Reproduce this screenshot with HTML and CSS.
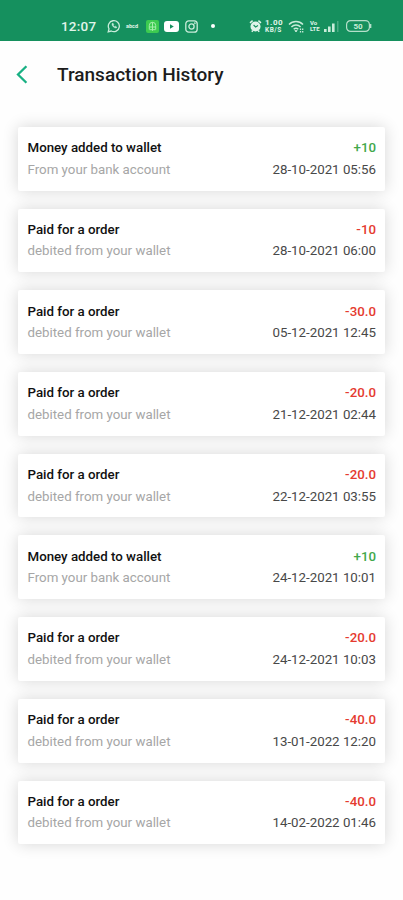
FILE: index.html
```html
<!DOCTYPE html>
<html lang="en">

<head>
    <meta charset="UTF-8">
    <meta name="viewport" content="width=device-width, initial-scale=1.0">
    <title>Transaction History</title>
    <link rel="stylesheet" href="styles.css">
</head>

<body>
    <!-- status bar -->
    <div class="status-bar">
        <div class="status-left">
            <span class="time">12:07</span>
            <svg class="whatsapp" width="14" height="14" viewBox="0 0 14 14" fill="none" stroke="#c9ecda">
                <path d="M1.2 12.8l.8-3A5.5 5.5 0 1 1 4.2 12z" stroke-width="1.3" />
                <path d="M5 4.600c-.5 2 2.300 4.900 4.400 4.400l.3-1-1.300-.8-.8.6-1.400-1.500.5-.8-.7-1.300z" fill="#c9ecda" stroke-width=".5" />
            </svg>
            <span class="carrier">abcd</span>
            <svg class="app" width="13" height="13" viewBox="0 0 13 13">
                <rect width="13" height="13" rx="2" fill="#3ccb50" />
                <path d="M6.500 2.200v8.600M3.300 9.500V5.500a3.200 3.200 0 0 1 6.400 0v4M3.300 7h6.400M3.500 9.700h6" fill="none" stroke="#a5efac" stroke-width="1" />
            </svg>
            <svg class="youtube" width="15" height="11" viewBox="0 0 15 11">
                <rect width="15" height="11" rx="3" fill="#fff" />
                <path d="M6 3.300v4.400L9.800 5.500z" fill="#15905e" />
            </svg>
            <svg class="instagram" width="13" height="13" viewBox="0 0 13 13" fill="none" stroke="#c9ecda" stroke-width="1.300">
                <rect x=".8" y=".8" width="11.400" height="11.400" rx="3" />
                <circle cx="6.500" cy="6.500" r="2.600" />
                <circle cx="9.800" cy="3.200" r=".3" />
            </svg>
            <span class="dot"></span>
        </div>
        <div class="status-right">
            <svg class="alarm" width="13" height="14" viewBox="0 0 13 14" fill="none" stroke="#e0f5ea">
                <circle cx="6.500" cy="7.500" r="4.300" fill="#e0f5ea" stroke-width="1.500" />
                <path d="M1 3.800L3.600 1.700M12 3.800L9.400 1.700M2.800 12.800l1-1.300M10.200 12.800l-1-1.300" stroke-width="1.500" />
                <path d="M4.600 6l2 2 2.400-1.500" stroke="#15905e" stroke-width="1.100" />
            </svg>
            <div class="speed">
                <span>1.00</span>
                <span>KB/S</span>
            </div>
            <svg class="wifi" width="16" height="13" viewBox="0 0 16 13" fill="none" stroke="#c9ecda" stroke-width="1.500">
                <path d="M1 4.400a9.800 9.800 0 0 1 14 0M3.400 7a6.500 6.500 0 0 1 9.200 0M5.700 9.300a3.300 3.300 0 0 1 4.600 0" />
                <path d="M6.800 10.600L8 12l1.200-1.400z" fill="#c9ecda" stroke-width=".8" />
                <path d="M12.500 8.500v4M14.700 8.500v4" stroke-width="1.300" stroke-dasharray="1.600 .8" />
            </svg>
            <div class="volte">
                <span>Vo</span>
                <span>LTE</span>
            </div>
            <svg class="signal" width="16" height="11" viewBox="0 0 16 11" fill="#c9ecda">
                <rect x="0" y="8" width="2.600" height="3" />
                <rect x="4" y="5.500" width="2.600" height="5.500" />
                <rect x="8" y="2.500" width="2.600" height="8.500" />
                <rect x="13" y="0" width="1.500" height="11" opacity=".3" />
            </svg>
            <svg class="battery" width="26" height="12" viewBox="0 0 26 12">
                <rect x=".6" y=".6" width="22.800" height="10.800" rx="4" fill="none" stroke="#b5dfca" stroke-width="1.200" />
                <path d="M24.600 4v4" stroke="#b5dfca" stroke-width="1.500" />
                <text class="level" x="12" y="9" text-anchor="middle">50</text>
            </svg>
        </div>
    </div>

    <!-- header -->
    <div class="header">
        <svg class="back" width="12" height="19" viewBox="0 0 12 19" fill="none" stroke="#18b083" stroke-width="2.300">
            <path d="M10.400 1.200L2 9.500l8.400 8.300" />
        </svg>
        <h1>Transaction History</h1>
    </div>

    <!-- transactions -->
    <div class="list">
        <div class="card">
            <div class="row">
                <h2>Money added to wallet</h2>
                <span class="amount plus">+10</span>
            </div>
            <div class="row">
                <p>From your bank account</p>
                <span class="date">28-10-2021 05:56</span>
            </div>
        </div>
        <div class="card">
            <div class="row">
                <h2>Paid for a order</h2>
                <span class="amount minus">-10</span>
            </div>
            <div class="row">
                <p>debited from your wallet</p>
                <span class="date">28-10-2021 06:00</span>
            </div>
        </div>
        <div class="card">
            <div class="row">
                <h2>Paid for a order</h2>
                <span class="amount minus">-30.0</span>
            </div>
            <div class="row">
                <p>debited from your wallet</p>
                <span class="date">05-12-2021 12:45</span>
            </div>
        </div>
        <div class="card">
            <div class="row">
                <h2>Paid for a order</h2>
                <span class="amount minus">-20.0</span>
            </div>
            <div class="row">
                <p>debited from your wallet</p>
                <span class="date">21-12-2021 02:44</span>
            </div>
        </div>
        <div class="card">
            <div class="row">
                <h2>Paid for a order</h2>
                <span class="amount minus">-20.0</span>
            </div>
            <div class="row">
                <p>debited from your wallet</p>
                <span class="date">22-12-2021 03:55</span>
            </div>
        </div>
        <div class="card">
            <div class="row">
                <h2>Money added to wallet</h2>
                <span class="amount plus">+10</span>
            </div>
            <div class="row">
                <p>From your bank account</p>
                <span class="date">24-12-2021 10:01</span>
            </div>
        </div>
        <div class="card">
            <div class="row">
                <h2>Paid for a order</h2>
                <span class="amount minus">-20.0</span>
            </div>
            <div class="row">
                <p>debited from your wallet</p>
                <span class="date">24-12-2021 10:03</span>
            </div>
        </div>
        <div class="card">
            <div class="row">
                <h2>Paid for a order</h2>
                <span class="amount minus">-40.0</span>
            </div>
            <div class="row">
                <p>debited from your wallet</p>
                <span class="date">13-01-2022 12:20</span>
            </div>
        </div>
        <div class="card">
            <div class="row">
                <h2>Paid for a order</h2>
                <span class="amount minus">-40.0</span>
            </div>
            <div class="row">
                <p>debited from your wallet</p>
                <span class="date">14-02-2022 01:46</span>
            </div>
        </div>
    </div>
</body>

</html>
```
FILE: styles.css
```css
* {
    margin: 0;
    padding: 0;
    box-sizing: border-box;
}

body {
    height: 900px;
    background-color: #fefefe;
    font-family: Roboto, sans-serif;
    overflow: hidden;
}

.status-bar {
    height: 41px;
    padding: 12px 31px 0 61px;
    background-color: #15905e;
    color: #e0f5ea;
    display: flex;
    align-items: flex-start;
    justify-content: space-between;
}

.status-left,
.status-right {
    height: 28px;
    display: flex;
    align-items: center;
}

.time {
    width: 46px;
    font-size: 13.5px;
    font-weight: 500;
    letter-spacing: 0.2px;
}

.carrier {
    width: 19px;
    padding-left: 5px;
    font-size: 5.5px;
    font-weight: bold;
}

.app {
    margin-left: 6px;
}

.youtube {
    margin-left: 5px;
}

.instagram {
    margin-left: 6px;
}

.dot {
    width: 4px;
    height: 4px;
    margin-left: 13px;
    border-radius: 50%;
    background-color: #fff;
}

.speed,
.volte {
    display: flex;
    flex-direction: column;
    font-weight: bold;
}

.speed {
    width: 20px;
    margin-left: 3px;
    font-size: 8px;
    line-height: 8px;
    letter-spacing: 0.5px;
}

.speed span + span {
    font-size: 6.5px;
    line-height: 7px;
}

.wifi {
    margin-left: 3px;
}

.volte {
    width: 10px;
    margin-left: 6px;
    font-size: 6px;
    line-height: 6px;
}

.signal {
    margin-left: 4px;
}

.battery {
    margin-left: 6px;
}

.level {
    font-size: 8px;
    font-weight: bold;
    fill: #c9ecda;
}

.header {
    height: 86px;
    padding: 0 0 19px 16px;
    display: flex;
    align-items: center;
    gap: 29px;
}

.header h1 {
    font-size: 19px;
    font-weight: 500;
    color: #1c1c1c;
}

.list {
    padding: 0 18px;
    display: flex;
    flex-direction: column;
    gap: 18px;
}

.card {
    height: 63.7px;
    padding: 10px 9px 0 9.5px;
    background-color: #fff;
    border-radius: 2px;
    box-shadow: 0 0 16px rgba(0, 0, 0, 0.16);
}

.row {
    height: 21.5px;
    display: flex;
    align-items: center;
    justify-content: space-between;
    font-size: 13.3px;
}

.row h2 {
    font-size: 13.3px;
    font-weight: 500;
    color: #111;
}

.row p {
    color: #a6a6a6;
}

.amount {
    font-weight: 500;
}

.plus {
    color: #43a84c;
}

.minus {
    color: #e53b30;
}

.date {
    color: #484848;
}
```
